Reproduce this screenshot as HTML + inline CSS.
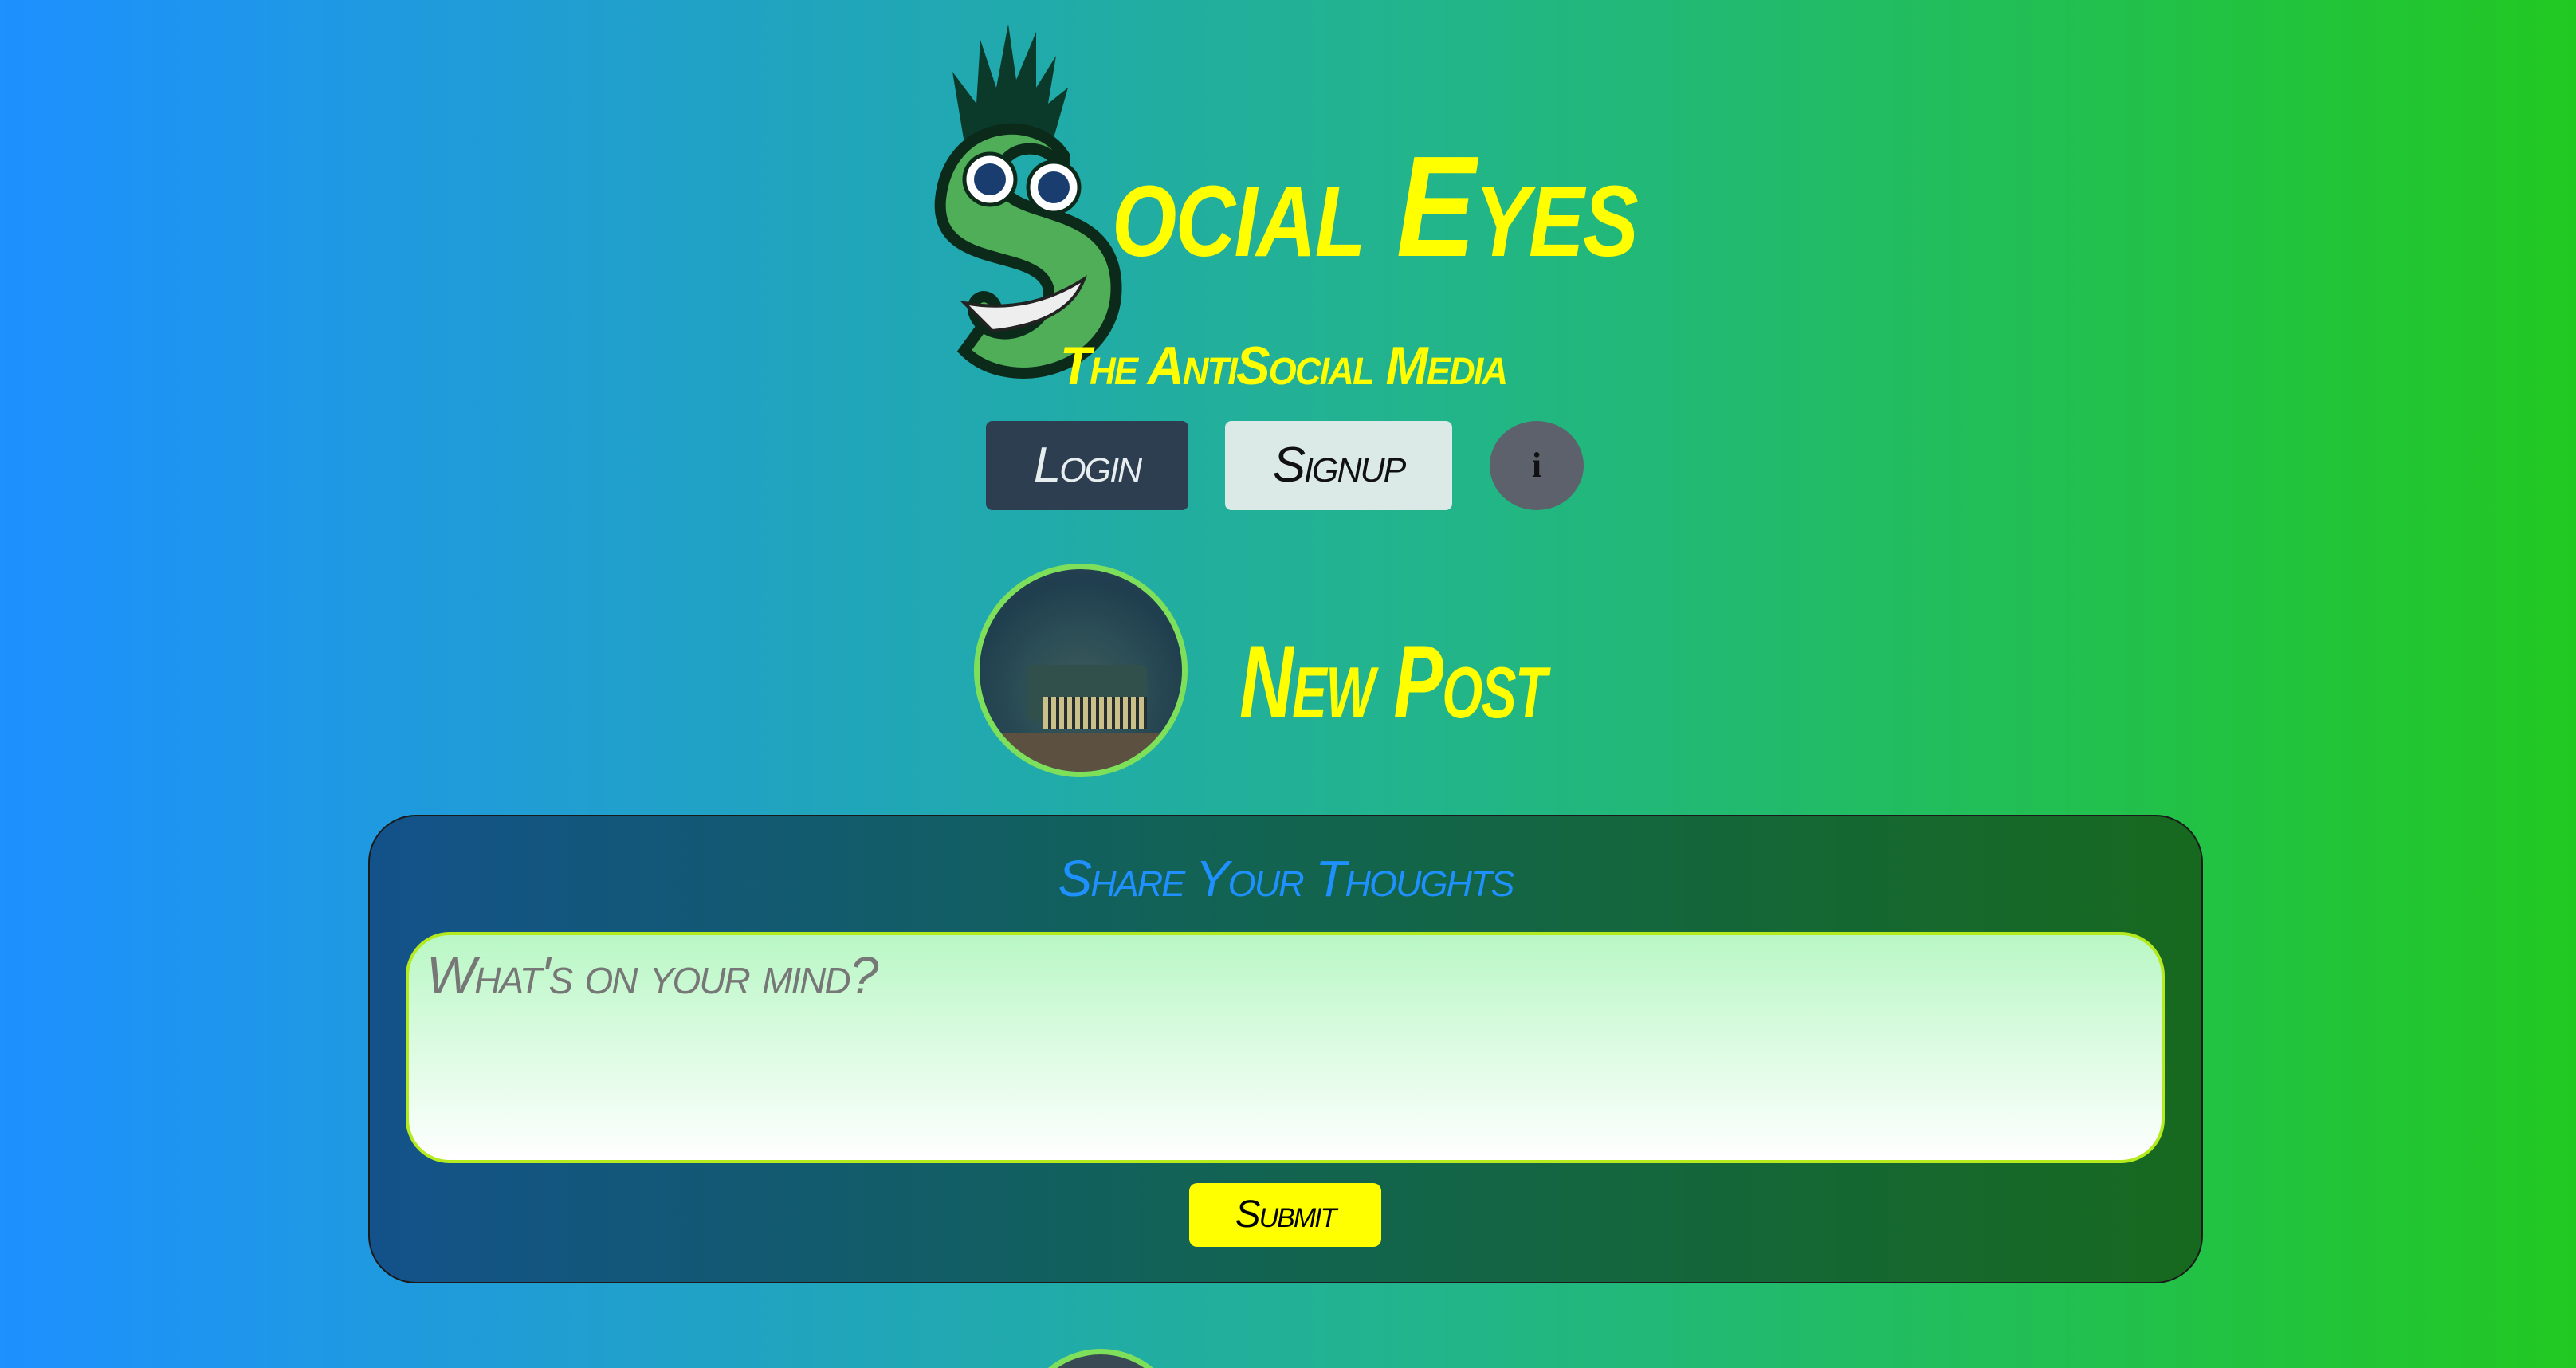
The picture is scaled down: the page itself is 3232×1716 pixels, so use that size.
<!DOCTYPE html>
<html><head><meta charset="utf-8"><style>
*{margin:0;padding:0;box-sizing:border-box}
html,body{width:3232px;height:1716px;overflow:hidden}
body{background:linear-gradient(90deg,#1e90ff 0%,#22b48c 55%,#22c822 100%);font-family:"Liberation Sans",sans-serif;position:relative}
.wrap{position:absolute;left:0;top:0;width:3232px;height:1716px;overflow:hidden}
.a{position:absolute}
.hand{font-variant:small-caps;font-style:italic;letter-spacing:-2px}
</style></head><body><div class="wrap">
<!-- S logo -->
<svg class="a" style="left:1150px;top:20px" width="270" height="460" viewBox="0 0 270 460">
<path d="M60 160 L45 70 L75 110 L80 30 L100 90 L115 10 L125 80 L150 20 L150 90 L175 50 L165 110 L190 90 L170 160 Z" fill="#0c3a2a"/>
<path d="M185 175 C150 120 40 130 30 230 C22 320 150 290 165 340 C175 390 100 420 75 380 C60 355 90 340 100 365 L60 420 C120 480 260 440 250 330 C240 230 110 260 105 205 C100 160 170 150 185 200 Z" fill="#4fae57" stroke="#0b2a1a" stroke-width="14"/>
<circle cx="92" cy="205" r="32" fill="#fff" stroke="#0b2a1a" stroke-width="5"/><circle cx="92" cy="205" r="20" fill="#183d6e"/>
<circle cx="172" cy="215" r="32" fill="#fff" stroke="#0b2a1a" stroke-width="5"/><circle cx="172" cy="215" r="20" fill="#183d6e"/>
<path d="M60 360 Q140 375 210 330 Q190 385 95 395 Z" fill="#eee" stroke="#222" stroke-width="4"/>
</svg>
<div class="a hand" style="left:1395px;top:170px;font-size:180px;color:#ffff00;font-weight:bold;line-height:1;transform:scaleX(.83);transform-origin:left;white-space:nowrap">ocial Eyes</div>
<div class="a hand" style="left:1330px;top:425px;font-size:68px;color:#ffff00;font-weight:bold;line-height:1;white-space:nowrap;transform:scaleX(.94);transform-origin:left">The AntiSocial Media</div>
<div class="a" style="left:1237px;top:528px;width:254px;height:112px;background:#2c3e50;border-radius:8px;color:#e8eef0;font-size:62px;text-align:center;line-height:112px"><span class="hand">Login</span></div>
<div class="a" style="left:1537px;top:528px;width:285px;height:112px;background:#dbe9e7;border-radius:8px;color:#111;font-size:62px;text-align:center;line-height:112px"><span class="hand">Signup</span></div>
<div class="a" style="left:1869px;top:528px;width:118px;height:112px;background:#5c616b;border-radius:50%;color:#111;font-family:'Liberation Serif',serif;font-weight:bold;font-size:44px;text-align:center;line-height:112px">i</div>
<div class="a" style="left:1222px;top:707px;width:268px;height:268px;border-radius:50%;border:7px solid #7ee05a;overflow:hidden;background:radial-gradient(circle at 50% 60%,#3b5a5a 0%,#2b4d55 40%,#1f3e4e 70%,#33445a 100%)">
<div class="a" style="left:60px;top:120px;width:150px;height:70px;background:#31504b;border-radius:8px"></div>
<div class="a" style="left:80px;top:160px;width:130px;height:40px;background:repeating-linear-gradient(90deg,#c9c08a 0 6px,#23302f 6px 10px)"></div>
<div class="a" style="left:0px;top:205px;width:268px;height:60px;background:#5c5140"></div>
</div>
<div class="a hand" style="left:1555px;top:790px;font-size:130px;color:#ffff00;font-weight:bold;line-height:1;white-space:nowrap;transform:scaleX(.72);transform-origin:left">New Post</div>
<div class="a" style="left:462px;top:1022px;width:2302px;height:588px;border:2px solid #1a1a1a;border-radius:60px;background:linear-gradient(90deg,#13528a,#126450 50%,#17691f)"></div>
<div class="a hand" style="left:462px;top:1070px;width:2302px;text-align:center;font-size:64px;color:#1e90ff;line-height:1">Share Your Thoughts</div>
<div class="a" style="left:509px;top:1169px;width:2207px;height:290px;border:4px solid #b4ea1e;border-radius:55px;background:linear-gradient(180deg,#b9f7c5,#ffffff)"></div>
<div class="a hand" style="left:535px;top:1190px;font-size:66px;color:#777;line-height:1">What's on your mind?</div>
<div class="a" style="left:1492px;top:1484px;width:241px;height:80px;background:#ffff00;border-radius:10px;text-align:center;line-height:80px;font-size:48px;color:#000"><span class="hand">Submit</span></div>
<div class="a" style="left:1278px;top:1692px;width:206px;height:206px;border-radius:50%;border:7px solid #7ee05a;background:#3a4a55"></div>
</div></body></html>
